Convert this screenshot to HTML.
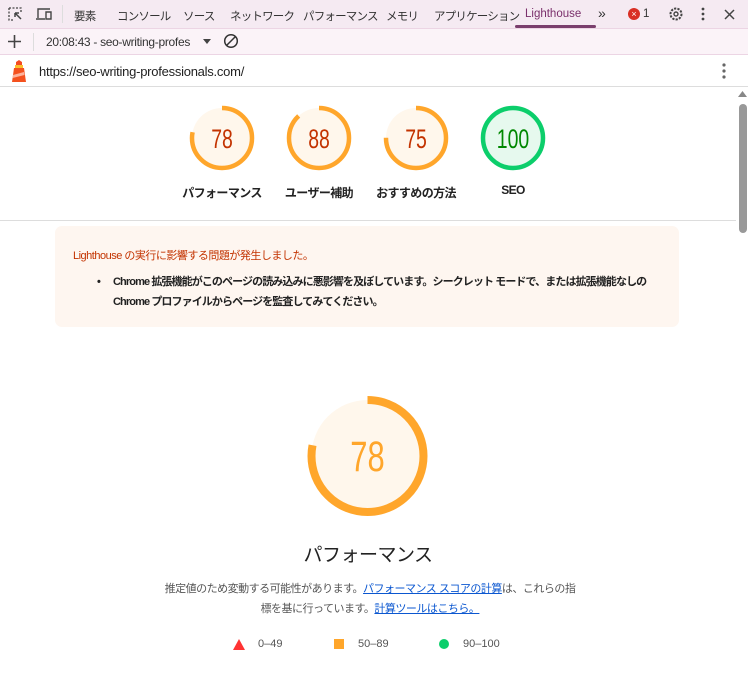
<!DOCTYPE html>
<html><head><meta charset="utf-8"><style>
*{margin:0;padding:0;box-sizing:border-box}
body{width:748px;height:700px;overflow:hidden;background:#fff;font-family:"Liberation Sans","Noto Sans CJK JP",sans-serif;color:#202124;position:relative}
.abs{position:absolute;white-space:nowrap}
.tb{top:0;left:0;width:748px;height:29px;background:#f5eaf2;border-bottom:1px solid #ecd5e4;font-size:11.5px;color:#333;letter-spacing:-0.8px}
.tb span{position:absolute;top:8px}
.tb2{top:29px;left:0;width:748px;height:26px;background:#fbf3f8;border-bottom:1px solid #ecd5e4;font-size:12px;color:#333}
.url{top:55px;left:0;width:748px;height:32px;border-bottom:1px solid #ddd;font-size:13px;color:#222}
.lbl{font-size:12px;font-weight:bold;color:#222;text-align:center;width:100px;top:184px;letter-spacing:-0.6px}
.warn{left:55px;top:226px;width:624px;height:101px;background:#fef6f0;border-radius:7px;font-size:11px;letter-spacing:-0.5px}
a{color:#0b57d0}
</style></head><body>
<div class="abs tb">
 <svg class="abs" style="left:8px;top:7px" width="16" height="15" viewBox="0 0 16 15"><path d="M1 1h12v5M1 1v12h5" fill="none" stroke="#444" stroke-width="1.3" stroke-dasharray="2 1.5"/><path d="M7 6l6 6M7 6v4M7 6h4" stroke="#444" stroke-width="1.5" fill="none"/></svg>
 <svg class="abs" style="left:35px;top:7px" width="18" height="14" viewBox="0 0 18 14"><path d="M3 11V2h12M1 12h9M11 5h5v7h-5z" fill="none" stroke="#444" stroke-width="1.4"/></svg>
 <div class="abs" style="left:62px;top:5px;width:1px;height:18px;background:#ddd"></div>
 <span style="left:74px">要素</span><span style="left:117px">コンソール</span><span style="left:183px">ソース</span><span style="left:230px">ネットワーク</span><span style="left:303px">パフォーマンス</span><span style="left:386px">メモリ</span><span style="left:434px">アプリケーション</span>
 <span style="left:525px;color:#7a2f6b;letter-spacing:0">Lighthouse</span>
 <div class="abs" style="left:515px;top:25px;width:81px;height:3px;background:#7a3e6d;border-radius:2px"></div>
 <span style="left:598px;font-size:14px;top:5px">»</span>
 <div class="abs" style="left:628px;top:8px;width:12px;height:12px;border-radius:50%;background:#d93025;color:#fff;font-size:9px;text-align:center;line-height:12px;letter-spacing:0">×</div>
 <span style="left:643px">1</span>
 <svg class="abs" style="left:668px;top:6px" width="16" height="16" viewBox="0 0 16 16"><circle cx="8" cy="8" r="5.5" fill="none" stroke="#444" stroke-width="2" stroke-dasharray="2.2 1.2"/><circle cx="8" cy="8" r="2" fill="none" stroke="#444" stroke-width="1.4"/></svg>
 <svg class="abs" style="left:701px;top:7px" width="4" height="14"><circle cx="2" cy="2" r="1.4" fill="#444"/><circle cx="2" cy="7" r="1.4" fill="#444"/><circle cx="2" cy="12" r="1.4" fill="#444"/></svg>
 <svg class="abs" style="left:724px;top:9px" width="11" height="11"><path d="M1 1l9 9M10 1l-9 9" stroke="#444" stroke-width="1.5"/></svg>
</div>
<div class="abs tb2">
 <svg class="abs" style="left:8px;top:6px" width="13" height="13"><path d="M6.5 0v13M0 6.5h13" stroke="#444" stroke-width="1.6"/></svg>
 <div class="abs" style="left:33px;top:4px;width:1px;height:18px;background:#ddd"></div>
 <span class="abs" style="left:46px;top:6px;width:152px;overflow:hidden;letter-spacing:-0.3px">20:08:43 - seo-writing-profes</span>
 <svg class="abs" style="left:203px;top:10px" width="8" height="5"><path d="M0 0h8L4 5z" fill="#444"/></svg>
 <svg class="abs" style="left:223px;top:4px" width="16" height="16"><circle cx="8" cy="8" r="6.3" fill="none" stroke="#333" stroke-width="1.5"/><path d="M3.5 12.5l9-9" stroke="#333" stroke-width="1.5"/></svg>
</div>
<div class="abs url">
 <svg class="abs" style="left:10px;top:4px" width="18" height="24" viewBox="0 0 18 24"><path d="M6 3l3-2 3 2v3H6z" fill="#f44b21"/><rect x="5" y="6" width="8" height="3" fill="#fbc02d"/><path d="M4 9h10l2 14H2z" fill="#f4511e"/><path d="M3 16l11-3 .5 3L2.6 19z" fill="#ffccbc" opacity=".8"/></svg>
 <span class="abs" style="left:39px;top:9px;letter-spacing:-0.25px">https://seo-writing-professionals.com/</span>
 <svg class="abs" style="left:722px;top:8px" width="4" height="16"><circle cx="2" cy="2" r="1.6" fill="#666"/><circle cx="2" cy="8" r="1.6" fill="#666"/><circle cx="2" cy="14" r="1.6" fill="#666"/></svg>
</div>
<div class="abs" style="left:737px;top:88px;width:11px;height:612px;background:#fff"></div>
<svg class="abs" style="left:738px;top:91px" width="9" height="6"><path d="M0 6h9L4.5 0z" fill="#888"/></svg>
<div class="abs" style="left:739px;top:104px;width:8px;height:129px;background:#999;border-radius:4px"></div>

<svg class="abs" style="left:0;top:88px" width="736" height="140">
 <g font-family="Liberation Sans, sans-serif" font-size="27" text-anchor="middle">
  <g transform="translate(222,50)"><circle r="30" fill="#fff7ec"/><circle r="30" fill="none" stroke="#ffa62b" stroke-width="4.5" stroke-dasharray="147.0 200" transform="rotate(-90)"/><text y="10" fill="#c33300" transform="scale(0.72,1)">78</text></g>
  <g transform="translate(319,50)"><circle r="30" fill="#fff7ec"/><circle r="30" fill="none" stroke="#ffa62b" stroke-width="4.5" stroke-dasharray="165.9 200" transform="rotate(-90)"/><text y="10" fill="#c33300" transform="scale(0.72,1)">88</text></g>
  <g transform="translate(416,50)"><circle r="30" fill="#fff7ec"/><circle r="30" fill="none" stroke="#ffa62b" stroke-width="4.5" stroke-dasharray="141.4 200" transform="rotate(-90)"/><text y="10" fill="#c33300" transform="scale(0.72,1)">75</text></g>
  <g transform="translate(513,50)"><circle r="30" fill="#e6f9ee"/><circle r="30" fill="none" stroke="#0cce6b" stroke-width="4.5"/><text y="10" fill="#008800" transform="scale(0.72,1)">100</text></g>
 </g>
</svg>
<div class="abs lbl" style="left:172px">パフォーマンス</div>
<div class="abs lbl" style="left:269px">ユーザー補助</div>
<div class="abs lbl" style="left:366px">おすすめの方法</div>
<div class="abs lbl" style="left:463px;top:183px">SEO</div>
<div class="abs" style="left:0;top:220px;width:736px;height:1px;background:#ddd"></div>

<div class="abs warn">
 <div class="abs" style="left:18px;top:21px;color:#c33300">Lighthouse の実行に影響する問題が発生しました。</div>
 <div class="abs" style="left:42px;top:46px;font-weight:bold;color:#222;line-height:20px">•</div>
 <div class="abs" style="left:58px;top:46px;font-weight:bold;color:#222;line-height:20px;letter-spacing:-0.9px">Chrome 拡張機能がこのページの読み込みに悪影響を及ぼしています。シークレット モードで、または拡張機能なしの<br>Chrome プロファイルからページを監査してみてください。</div>
</div>

<svg class="abs" style="left:300px;top:388px" width="136" height="136">
 <g transform="translate(67.5,68)"><circle r="56" fill="#fff7ec"/><circle r="56" fill="none" stroke="#ffa62b" stroke-width="8" stroke-dasharray="274.4 400" transform="rotate(-90)"/>
 <text y="15" text-anchor="middle" font-family="Liberation Sans, sans-serif" font-size="43" fill="#ffa62b" transform="scale(0.72,1)">78</text></g>
</svg>
<div class="abs" style="left:0;width:736px;top:540px;text-align:center;font-size:19px;color:#222;letter-spacing:-0.5px">パフォーマンス</div>
<div class="abs" style="left:120px;width:500px;top:579px;text-align:center;font-size:11px;color:#555;line-height:20px;letter-spacing:-0.5px">推定値のため変動する可能性があります。<a href="#">パフォーマンス スコアの計算</a>は、これらの指<br>標を基に行っています。<a href="#">計算ツールはこちら。</a></div>
<svg class="abs" style="left:233px;top:639px" width="12" height="11"><path d="M6 0l6 11H0z" fill="#f33"/></svg>
<span class="abs" style="left:258px;top:638px;font-size:11px;color:#555">0–49</span>
<div class="abs" style="left:334px;top:639px;width:10px;height:10px;background:#ffa62b"></div>
<span class="abs" style="left:358px;top:638px;font-size:11px;color:#555">50–89</span>
<div class="abs" style="left:439px;top:639px;width:10px;height:10px;border-radius:50%;background:#0cce6b"></div>
<span class="abs" style="left:463px;top:638px;font-size:11px;color:#555">90–100</span>
</body></html>
